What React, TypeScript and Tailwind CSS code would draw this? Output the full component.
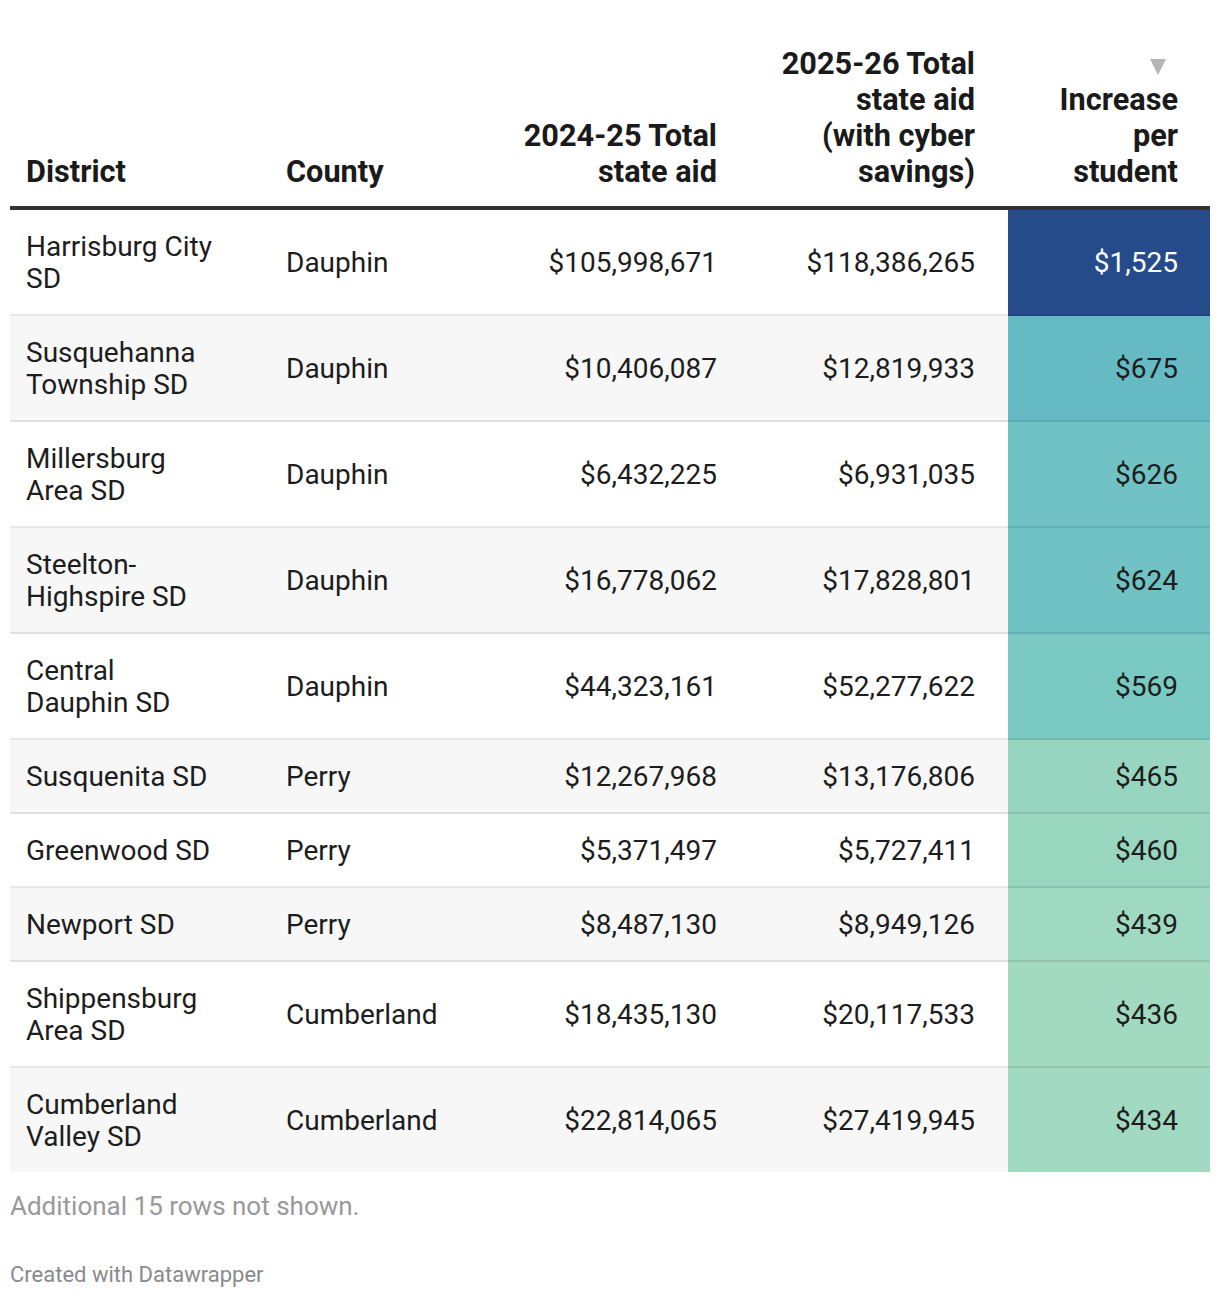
import React from 'react';

type Row = {
  district: string[];
  county: string;
  aid2425: string;
  aid2526: string;
  increase: string;
  heat: string;
};

const rows: Row[] = [
  { district: ['Harrisburg City', 'SD'], county: 'Dauphin', aid2425: '$105,998,671', aid2526: '$118,386,265', increase: '$1,525', heat: 'bg-[#264b8b] text-white' },
  { district: ['Susquehanna', 'Township SD'], county: 'Dauphin', aid2425: '$10,406,087', aid2526: '$12,819,933', increase: '$675', heat: 'bg-[#66bac4] text-[#1d1d1d]' },
  { district: ['Millersburg', 'Area SD'], county: 'Dauphin', aid2425: '$6,432,225', aid2526: '$6,931,035', increase: '$626', heat: 'bg-[#70c2c4] text-[#1d1d1d]' },
  { district: ['Steelton-', 'Highspire SD'], county: 'Dauphin', aid2425: '$16,778,062', aid2526: '$17,828,801', increase: '$624', heat: 'bg-[#70c2c4] text-[#1d1d1d]' },
  { district: ['Central', 'Dauphin SD'], county: 'Dauphin', aid2425: '$44,323,161', aid2526: '$52,277,622', increase: '$569', heat: 'bg-[#7acac3] text-[#1d1d1d]' },
  { district: ['Susquenita SD'], county: 'Perry', aid2425: '$12,267,968', aid2526: '$13,176,806', increase: '$465', heat: 'bg-[#98d5c0] text-[#1d1d1d]' },
  { district: ['Greenwood SD'], county: 'Perry', aid2425: '$5,371,497', aid2526: '$5,727,411', increase: '$460', heat: 'bg-[#99d6bf] text-[#1d1d1d]' },
  { district: ['Newport SD'], county: 'Perry', aid2425: '$8,487,130', aid2526: '$8,949,126', increase: '$439', heat: 'bg-[#a0d9c1] text-[#1d1d1d]' },
  { district: ['Shippensburg', 'Area SD'], county: 'Cumberland', aid2425: '$18,435,130', aid2526: '$20,117,533', increase: '$436', heat: 'bg-[#a1d9c1] text-[#1d1d1d]' },
  { district: ['Cumberland', 'Valley SD'], county: 'Cumberland', aid2425: '$22,814,065', aid2526: '$27,419,945', increase: '$434', heat: 'bg-[#a1d9c2] text-[#1d1d1d]' },
];

const cols = 'grid grid-cols-[260px_230px_233px_275px_202px]';

const App: React.FC = () => {
  return (
    <div className="min-h-screen bg-white px-[10px] pt-[46px] font-['Roboto',sans-serif]">
      <div className="w-[1200px]">
        {/* Header */}
        <div className={`${cols} border-b-4 border-[#333333] pb-[16px] text-[30.7px] font-bold leading-[36px] text-[#1a1a1a]`}>
          <div className="flex items-end pl-4">District</div>
          <div className="flex items-end pl-4">County</div>
          <div className="flex items-end justify-end pr-4 text-right">
            2024-25 Total<br />state aid
          </div>
          <div className="flex items-end justify-end pr-[33px] text-right">
            <div>
              2025-26 Total<br />state aid<br />(with cyber<br />savings)
            </div>
          </div>
          <div className="flex flex-col items-end justify-end pr-[32px] text-right">
            <div className="flex h-[36px] items-end pb-[7px] pr-[12px]">
              <svg width="16" height="16" viewBox="0 0 16 16">
                <path d="M0 0 L16 0 L8 16 Z" fill="#b5b5b5" />
              </svg>
            </div>
            <div>
              Increase<br />per<br />student
            </div>
          </div>
        </div>

        {/* Body */}
        <div className="text-[28px] leading-[32px] text-[#1d1d1d]">
          {rows.map((r, i) => {
            const last = i === rows.length - 1;
            const bg = i % 2 === 1 ? 'bg-[#f7f7f7]' : 'bg-white';
            const cell = `flex items-center pt-[21px] pb-[19px] ${last ? '' : 'border-b-2 border-black/[0.09]'}`;
            return (
              <div key={i} className={cols}>
                <div className={`${cell} ${bg} pl-4`}>
                  <div>
                    {r.district.map((l, j) => (
                      <div key={j} className="whitespace-nowrap">{l}</div>
                    ))}
                  </div>
                </div>
                <div className={`${cell} ${bg} pl-4`}>{r.county}</div>
                <div className={`${cell} ${bg} justify-end pr-4`}>{r.aid2425}</div>
                <div className={`${cell} ${bg} justify-end pr-[33px]`}>{r.aid2526}</div>
                <div className={`${cell} ${r.heat} justify-end pr-[32px]`}>{r.increase}</div>
              </div>
            );
          })}
        </div>

        {/* Notes */}
        <p className="mt-[18px] text-[26px] leading-[32px] text-[#999999]">Additional 15 rows not shown.</p>
        <p className="mt-[39px] text-[22px] leading-[28px] text-[#8a8a8a]">Created with Datawrapper</p>
      </div>
    </div>
  );
};

export default App;
